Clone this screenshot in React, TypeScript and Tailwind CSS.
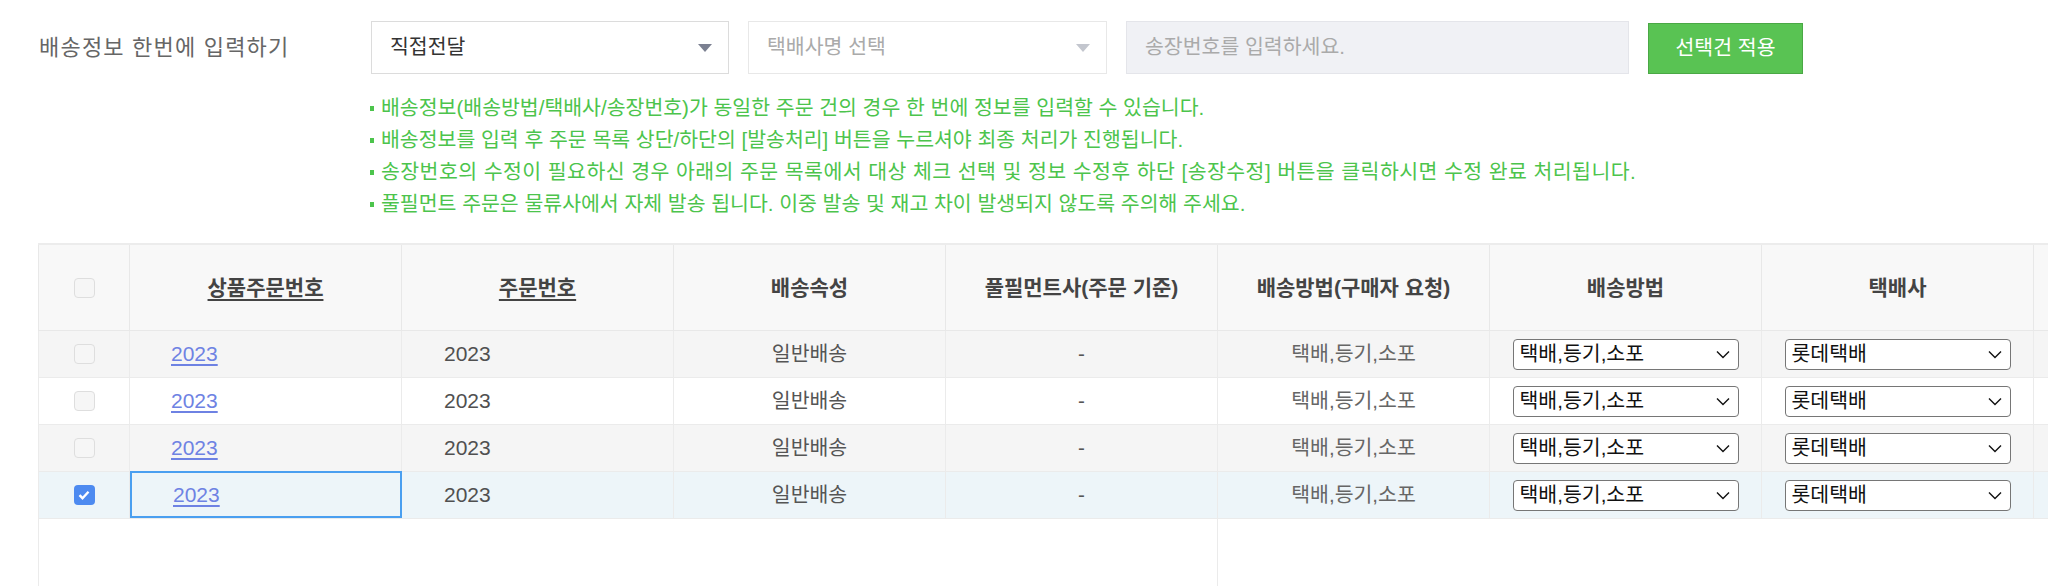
import React from "react";

const rows = [
  { bg: "bg-[#f5f5f5]", checked: false },
  { bg: "bg-white", checked: false },
  { bg: "bg-[#f5f5f5]", checked: false },
  { bg: "bg-[#edf5f9]", checked: true },
];

const notes = [
  { text: "배송정보(배송방법/택배사/송장번호)가 동일한 주문 건의 경우 한 번에 정보를 입력할 수 있습니다.", wide: false },
  { text: "배송정보를 입력 후 주문 목록 상단/하단의 [발송처리] 버튼을 누르셔야 최종 처리가 진행됩니다.", wide: false },
  {
    text: "송장번호의 수정이 필요하신 경우 아래의 주문 목록에서 대상 체크 선택 및 정보 수정후 하단 [송장수정] 버튼을 클릭하시면 수정 완료 처리됩니다.",
    wide: true,
  },
  { text: "풀필먼트 주문은 물류사에서 자체 발송 됩니다. 이중 발송 및 재고 차이 발생되지 않도록 주의해 주세요.", wide: false },
];

function Triangle({ color }: { color: string }) {
  return (
    <svg width="14" height="8" viewBox="0 0 14 8">
      <path d="M0 0h14L7 8z" fill={color} />
    </svg>
  );
}

function Chevron() {
  return (
    <svg width="14" height="9" viewBox="0 0 14 9" fill="none">
      <path d="M1 1.5l6 6 6-6" stroke="#111" strokeWidth="1.4" />
    </svg>
  );
}

function Check({ checked }: { checked: boolean }) {
  if (checked) {
    return (
      <span className="w-[21px] h-[20px] rounded-[4px] bg-[#4d8af0] flex items-center justify-center">
        <svg width="12" height="10" viewBox="0 0 12 10" fill="none">
          <path d="M1.5 5.2l3 3 6-6.4" stroke="#fff" strokeWidth="2.4" />
        </svg>
      </span>
    );
  }
  return <span className="w-[21px] h-[20px] rounded-[4px] border border-[#dedede] bg-[#f6f6f6]" />;
}

function FakeSelect({ value }: { value: string }) {
  return (
    <div className="w-[226px] h-[31px] border border-[#767676] rounded-[4px] bg-white flex items-center justify-between pl-[6px] pr-[8px] text-[20.5px] text-[#111]">
      <span>{value}</span>
      <Chevron />
    </div>
  );
}

const gridCols =
  "grid grid-cols-[92px_272px_272px_272px_272px_272px_272px_272px_272px]";

export default function App() {
  return (
    <div className="w-[2048px] h-[586px] overflow-hidden bg-white font-['Liberation_Sans','Noto_Sans_CJK_KR',sans-serif]">
      {/* bulk input bar */}
      <div className="flex items-start pt-[21px] pl-[39px]">
        <div className="w-[332px] h-[53px] flex items-center text-[22px] tracking-[1.2px] text-[#666]">
          배송정보 한번에 입력하기
        </div>
        <div className="w-[358px] h-[53px] border border-[#dcdcdc] bg-white flex items-center justify-between pl-[18px] pr-[16px] text-[20.5px] text-[#333]">
          <span>직접전달</span>
          <Triangle color="#7b8091" />
        </div>
        <div className="ml-[19px] w-[359px] h-[53px] border border-[#e8e8e8] bg-white flex items-center justify-between pl-[18px] pr-[16px] text-[20.5px] text-[#aaa]">
          <span>택배사명 선택</span>
          <Triangle color="#c3c6ce" />
        </div>
        <div className="ml-[19px] w-[503px] h-[53px] border border-[#e4e5ea] bg-[#f0f1f5] flex items-center pl-[18px] text-[20.5px] text-[#aaa]">
          송장번호를 입력하세요.
        </div>
        <button className="ml-[19px] mt-[2px] w-[155px] h-[51px] border border-[#4aa845] bg-[#59c353] text-white text-[20.5px] flex items-center justify-center">
          선택건 적용
        </button>
      </div>

      {/* notes */}
      <div className="pl-[370px] mt-[18px] text-[20.5px] leading-[32px] text-[#4cc44c]">
        {notes.map((n) => (
          <div key={n.text} className={`flex items-center whitespace-nowrap ${n.wide ? "tracking-[0.45px]" : ""}`}>
            <span className="w-[4px] h-[5px] bg-[#4cc44c] mr-[7px]" />
            {n.text}
          </div>
        ))}
      </div>

      {/* order table */}
      <div className="mt-[23px] ml-[38px] border-t-2 border-[#ececec] w-[2268px]">
        <div className={`${gridCols} h-[86px] bg-[#f8f8f8] border-b border-[#e8e8e8] text-[21px] font-bold text-[#444]`}>
          <div className="border-l border-r border-[#e8e8e8] flex items-center justify-center">
            <Check checked={false} />
          </div>
          <div className="border-r border-[#e8e8e8] flex items-center justify-center">
            <span className="underline underline-offset-[4px]">상품주문번호</span>
          </div>
          <div className="border-r border-[#e8e8e8] flex items-center justify-center">
            <span className="underline underline-offset-[4px]">주문번호</span>
          </div>
          <div className="border-r border-[#e8e8e8] flex items-center justify-center">배송속성</div>
          <div className="border-r border-[#e8e8e8] flex items-center justify-center">풀필먼트사(주문 기준)</div>
          <div className="border-r border-[#e8e8e8] flex items-center justify-center">배송방법(구매자 요청)</div>
          <div className="border-r border-[#e8e8e8] flex items-center justify-center">배송방법</div>
          <div className="border-r border-[#e8e8e8] flex items-center justify-center">택배사</div>
          <div className="border-r border-[#e8e8e8]" />
        </div>

        {rows.map((r, i) => (
          <div key={i} className={`${gridCols} h-[47px] border-b border-[#ebebeb] ${r.bg} text-[20.5px] text-[#555]`}>
            <div className="border-l border-r border-[#ebebeb] flex items-center justify-center">
              <Check checked={r.checked} />
            </div>
            <div
              className={`flex items-center pl-[41px] ${
                r.checked ? "border-2 border-[#4a9ff0] -mt-px" : "border-r border-[#ebebeb]"
              }`}
            >
              <span className="text-[21px] text-[#6e82e3] underline underline-offset-[3px]">2023</span>
            </div>
            <div className="border-r border-[#ebebeb] flex items-center pl-[42px] text-[21px] text-[#505050]">2023</div>
            <div className="border-r border-[#ebebeb] flex items-center justify-center">일반배송</div>
            <div className="border-r border-[#ebebeb] flex items-center justify-center">-</div>
            <div className="border-r border-[#ebebeb] flex items-center justify-center text-[#666]">택배,등기,소포</div>
            <div className="border-r border-[#ebebeb] flex items-center justify-center">
              <FakeSelect value="택배,등기,소포" />
            </div>
            <div className="border-r border-[#ebebeb] flex items-center justify-center">
              <FakeSelect value="롯데택배" />
            </div>
            <div className="border-r border-[#ebebeb]" />
          </div>
        ))}

        <div className="h-[120px] w-[1180px] border-l border-r border-[#ebebeb]" />
      </div>
    </div>
  );
}
